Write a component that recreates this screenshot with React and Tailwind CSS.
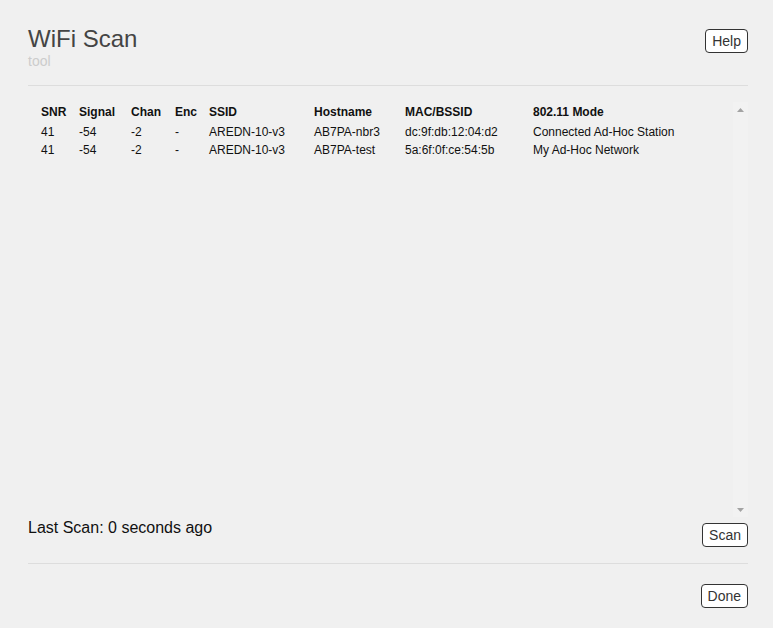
import React from 'react';

const columns = [
  { key: 'snr', label: 'SNR', width: 'w-[38px]' },
  { key: 'signal', label: 'Signal', width: 'w-[52px]' },
  { key: 'chan', label: 'Chan', width: 'w-[44px]' },
  { key: 'enc', label: 'Enc', width: 'w-[34px]' },
  { key: 'ssid', label: 'SSID', width: 'w-[105px]' },
  { key: 'host', label: 'Hostname', width: 'w-[91px]' },
  { key: 'mac', label: 'MAC/BSSID', width: 'w-[128px]' },
  { key: 'mode', label: '802.11 Mode', width: 'flex-1' },
];

const scanResults = [
  { snr: '41', signal: '-54', chan: '-2', enc: '-', ssid: 'AREDN-10-v3', host: 'AB7PA-nbr3', mac: 'dc:9f:db:12:04:d2', mode: 'Connected Ad-Hoc Station' },
  { snr: '41', signal: '-54', chan: '-2', enc: '-', ssid: 'AREDN-10-v3', host: 'AB7PA-test', mac: '5a:6f:0f:ce:54:5b', mode: 'My Ad-Hoc Network' },
];

function Button({ children, className = '' }) {
  return (
    <button
      className={`h-[24px] px-[6px] bg-white border border-[#333] rounded-[4px] text-[14px] leading-[22px] text-[#333] ${className}`}
    >
      {children}
    </button>
  );
}

export default function App() {
  return (
    <div className="min-h-screen bg-[#f0f0f0] font-['Liberation_Sans',Arial,sans-serif] pl-[28px] pr-[25px] pt-[25px] pb-[20px] w-[773px]">
      {/* Header */}
      <div className="flex justify-between items-start">
        <div>
          <h1 className="text-[24px] leading-[28px] text-[#444]">WiFi Scan</h1>
          <div className="text-[14px] leading-[16px] text-[#ccc]">tool</div>
        </div>
        <Button className="mt-[4px]">Help</Button>
      </div>

      <div className="mt-[16px] h-px bg-[#ddd]" />

      {/* Scan results */}
      <div className="mt-[16px] h-[415px] flex">
        <div className="flex-1 overflow-y-auto pl-[13px] pt-[1px] text-[12px] text-[#111]">
          <div className="flex h-[19px] leading-[19px] font-bold">
            {columns.map((c) => (
              <div key={c.key} className={c.width}>{c.label}</div>
            ))}
          </div>
          <div className="mt-[1px]">
            {scanResults.map((r) => (
              <div key={r.mac} className="flex h-[18px] leading-[18px]">
                {columns.map((c) => (
                  <div key={c.key} className={c.width}>{r[c.key]}</div>
                ))}
              </div>
            ))}
          </div>
        </div>
        {/* scrollbar track */}
        <div className="w-[15px] bg-[#f2f2f2] flex flex-col justify-between items-center">
          <div className="h-[15px] flex items-center justify-center">
            <svg width="7" height="4" viewBox="0 0 7 4"><path d="M3.5 0L7 4H0z" fill="#a3a3a3" /></svg>
          </div>
          <div className="h-[15px] flex items-center justify-center">
            <svg width="7" height="4" viewBox="0 0 7 4"><path d="M0 0h7L3.5 4z" fill="#a3a3a3" /></svg>
          </div>
        </div>
      </div>

      {/* Footer */}
      <div className="flex justify-between items-start">
        <div className="text-[16px] leading-[20px] text-[#111] mt-[1px]">Last Scan: 0 seconds ago</div>
        <Button className="mt-[6px]">Scan</Button>
      </div>

      <div className="mt-[16px] h-px bg-[#ddd]" />

      <div className="flex justify-end mt-[20px]">
        <Button>Done</Button>
      </div>
    </div>
  );
}
